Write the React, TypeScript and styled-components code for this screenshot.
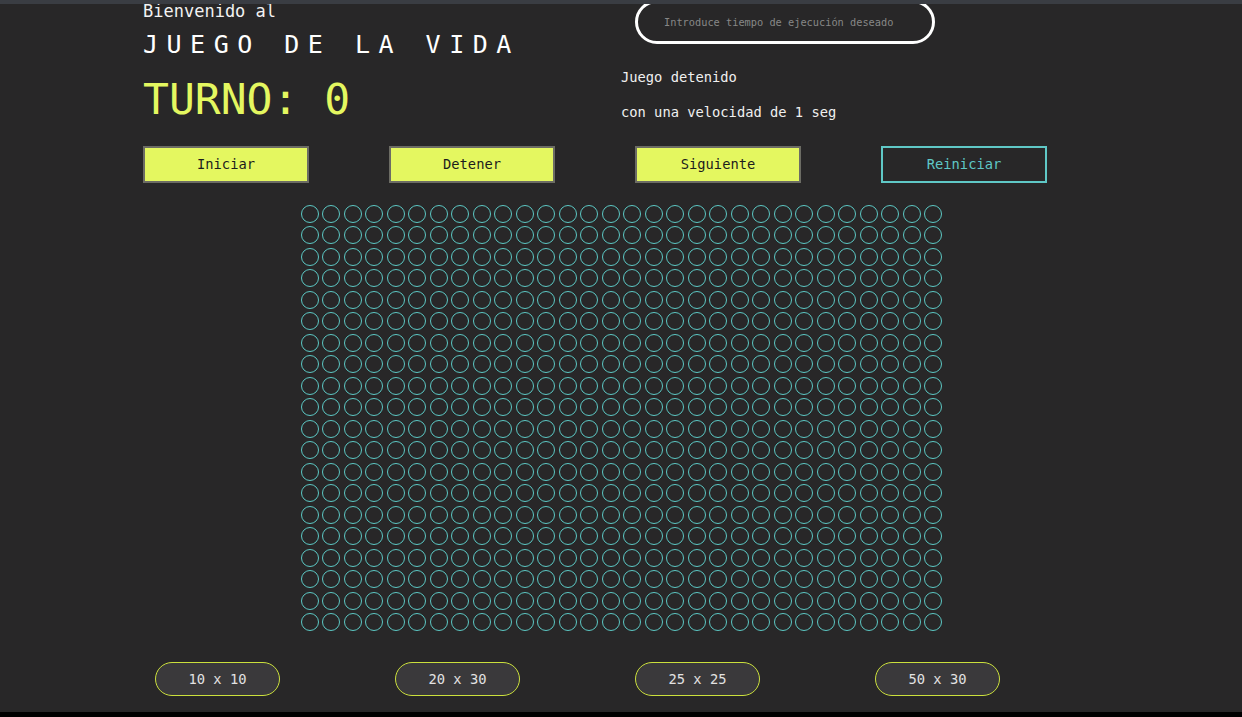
import React from 'react'
import styled, { createGlobalStyle } from 'styled-components'

const ROWS = 20
const COLS = 30

const App = () => {
  const cells = Array.from({ length: ROWS * COLS }, (_, i) => i)

  return (
    <>
      <GlobalStyle />
      <TopStrip />
      <Page>
        <Header>
          <Intro>
            <Welcome>Bienvenido al</Welcome>
            <Title>JUEGO DE LA VIDA</Title>
            <Turn>TURNO: 0</Turn>
          </Intro>
          <Status>
            <SpeedInput placeholder="Introduce tiempo de ejecución deseado" />
            <StatusLine>Juego detenido</StatusLine>
            <StatusLine $gap={17}>con una velocidad de 1 seg</StatusLine>
          </Status>
        </Header>

        <Controls>
          <ControlButton>Iniciar</ControlButton>
          <ControlButton>Detener</ControlButton>
          <ControlButton>Siguiente</ControlButton>
          <ControlButton $outline>Reiniciar</ControlButton>
        </Controls>

        <Board>
          {cells.map((i) => (
            <Cell key={i} />
          ))}
        </Board>

        <Sizes>
          <SizeButton>10 x 10</SizeButton>
          <SizeButton>20 x 30</SizeButton>
          <SizeButton>25 x 25</SizeButton>
          <SizeButton>50 x 30</SizeButton>
        </Sizes>
      </Page>
    </>
  )
}

export default App

const GlobalStyle = createGlobalStyle`
  body {
    margin: 0;
    background: #000;
    font-family: "DejaVu Sans Mono", "Liberation Mono", monospace;
  }
`

const TopStrip = styled.div`
  position: fixed;
  top: 0;
  left: 0;
  right: 0;
  height: 4px;
  background: #3a3d43;
  z-index: 2;
`

const Page = styled.div`
  height: 712px;
  background: #282728;
  overflow: hidden;
`

const Header = styled.div`
  display: grid;
  grid-template-columns: 478px 1fr;
  padding-left: 143px;
`

const Intro = styled.div`
  display: flex;
  flex-direction: column;
  padding-top: 1px;
`

const Welcome = styled.div`
  font-size: 17px;
  line-height: 20px;
  color: #f2f2f2;
`

const Title = styled.h1`
  margin: 8.5px 0 0;
  font-size: 25px;
  line-height: 30px;
  font-weight: normal;
  letter-spacing: 8.5px;
  color: #ffffff;
`

const Turn = styled.div`
  margin-top: 15.5px;
  font-size: 43px;
  line-height: 48px;
  color: #e4f760;
`

const Status = styled.div`
  display: flex;
  flex-direction: column;
  align-items: flex-start;
`

const SpeedInput = styled.input`
  box-sizing: border-box;
  margin-left: 14px;
  width: 300px;
  height: 44px;
  padding: 0 26px;
  border: 3px solid #ffffff;
  border-radius: 22px;
  background: transparent;
  font-family: inherit;
  font-size: 10.3px;
  color: #ddd;
  outline: none;

  &::placeholder {
    color: #878787;
  }
`

const StatusLine = styled.div<{ $gap?: number }>`
  margin-top: ${(p) => p.$gap ?? 24}px;
  font-size: 13.75px;
  line-height: 18px;
  color: #f0f0f0;
`

const Controls = styled.div`
  display: flex;
  gap: 80px;
  padding-left: 143px;
  margin-top: 22.5px;
`

const ControlButton = styled.button<{ $outline?: boolean }>`
  box-sizing: border-box;
  width: 166px;
  height: 37px;
  border: 2px solid ${(p) => (p.$outline ? '#5fc8c6' : '#6c6c64')};
  background: ${(p) => (p.$outline ? 'transparent' : '#e4f760')};
  color: ${(p) => (p.$outline ? '#5fc8c6' : '#1c1c1c')};
  font-family: inherit;
  font-size: 13.75px;
  padding: 0;
`

const Board = styled.div`
  display: grid;
  grid-template-columns: repeat(${COLS}, 18px);
  gap: 3.5px;
  justify-content: center;
  margin-top: 22px;
  padding-left: 1px;
`

const Cell = styled.div`
  box-sizing: border-box;
  width: 18px;
  height: 18px;
  border: 1.5px solid #5cc8c4;
  border-radius: 50%;
`

const Sizes = styled.div`
  display: flex;
  gap: 115px;
  padding-left: 155px;
  margin-top: 30.5px;
`

const SizeButton = styled.button`
  box-sizing: border-box;
  width: 125px;
  height: 34px;
  border: 1.5px solid #cbe03c;
  border-radius: 17px;
  background: #3a393b;
  color: #e2e2e2;
  font-family: inherit;
  font-size: 13.75px;
  padding: 0;
`
